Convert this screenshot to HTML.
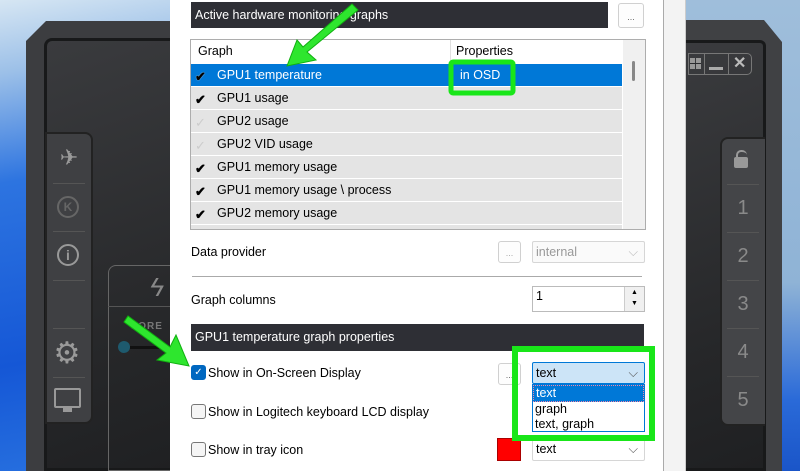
<!DOCTYPE html>
<html><head><meta charset="utf-8"><style>
*{box-sizing:border-box;margin:0;padding:0}
body{width:800px;height:471px;overflow:hidden;position:relative;font-family:"Liberation Sans",sans-serif;font-size:12.5px;color:#000;background:#4f8ad8}
.abs{position:absolute}
.hdr{background:#2e2f35;color:#fff;padding-left:4px;line-height:26px;font-size:12.5px}
.btn{border:1px solid #d0d0d0;border-radius:3px;background:#fdfdfd;color:#666;font-size:9px;text-align:center}
.row{position:absolute;left:0;width:431px;height:22px;background:#e4e4e4;line-height:22px}
.row span{position:absolute;left:26px}
.chk{position:absolute;left:4px;top:2px;font-size:13px;font-weight:bold}
.combo{border:1px solid #d6d6d6;border-radius:2px;background:#fff;padding-left:3px;line-height:20px}
.cb{width:15px;height:15px;border:1px solid #777;border-radius:3px;background:#f5f5f5}
.skin{background:linear-gradient(160deg,#3a3b3e,#262729 70%,#1f2022)}
.tab{color:#8a8a8a;text-align:center;font-size:20px}
</style></head><body>
<div class="abs" style="left:0;top:0;width:800px;height:471px;background:linear-gradient(170deg,#d6e6f3 0%,#9cc0e8 12%,#2d74e0 30%,#1557d6 60%,#3a8ae8 100%)"></div>
<div class="abs" style="left:660px;top:0;width:140px;height:471px;background:linear-gradient(180deg,#9fbedb 0%,#8fb3d6 60%,#2a6ad8 85%,#1a55c8 100%)"></div>
<!-- left skin -->
<div class="abs" style="left:26px;top:21px;width:160px;height:450px;background:#3c3d40;clip-path:polygon(20px 0,100% 0,100% 100%,0 100%,0 20px)"></div>
<div class="abs skin" style="left:44px;top:38px;width:140px;height:433px;border-radius:8px 0 0 0;border:3px solid #18191a;border-right:none"></div>
<div class="abs" style="left:45px;top:132px;width:48px;height:292px;background:#3f4043;border-radius:0 8px 8px 0;border:2px solid #222"></div>
<div class="abs tab" style="left:50px;top:145px;width:38px;font-size:22px;color:#9a9a9a">✈</div>
<div class="abs" style="left:53px;top:183px;width:32px;border-top:1px solid #555"></div>
<div class="abs" style="left:57px;top:196px;width:22px;height:22px;border:2px solid #666;border-radius:50%;color:#666;font-size:12px;text-align:center;line-height:18px;font-weight:bold">K</div>
<div class="abs" style="left:53px;top:231px;width:32px;border-top:1px solid #555"></div>
<div class="abs" style="left:57px;top:244px;width:22px;height:22px;border:2px solid #999;border-radius:50%;color:#999;font-size:14px;text-align:center;line-height:18px;font-weight:bold">i</div>
<div class="abs" style="left:53px;top:280px;width:32px;border-top:1px solid #555"></div>
<div class="abs" style="left:53px;top:328px;width:32px;border-top:1px solid #555"></div>
<div class="abs tab" style="left:50px;top:336px;width:34px;font-size:30px;color:#9a9a9a;line-height:36px">⚙</div>
<div class="abs" style="left:53px;top:377px;width:32px;border-top:1px solid #555"></div>
<div class="abs" style="left:54px;top:388px;width:27px;height:20px;border:2px solid #999;border-radius:2px"></div>
<div class="abs" style="left:63px;top:408px;width:9px;height:4px;background:#999"></div>
<div class="abs" style="left:108px;top:265px;width:70px;height:206px;border:1px solid #666;border-right:none;border-radius:8px 0 0 0"></div>
<div class="abs" style="left:108px;top:306px;width:70px;border-top:1px solid #555"></div>
<div class="abs" style="left:150px;top:272px;color:#888;font-size:26px;font-style:italic">ϟ</div>
<div class="abs" style="left:130px;top:321px;color:#777;font-size:10px;font-weight:bold;letter-spacing:1px">CORE</div>
<div class="abs" style="left:118px;top:341px;width:12px;height:12px;border-radius:50%;background:#1e5a6e"></div>
<div class="abs" style="left:130px;top:346px;width:45px;height:3px;background:#111"></div>
<!-- right skin -->
<div class="abs" style="left:686px;top:20px;width:96px;height:451px;background:#404144;clip-path:polygon(0 0,78px 0,100% 22px,100% 100%,0 100%)"></div>
<div class="abs skin" style="left:686px;top:40px;width:80px;height:431px;border:3px solid #18191a;border-left:none;border-radius:0 6px 0 0"></div>
<div class="abs" style="left:688px;top:53px;width:64px;height:22px;border:1px solid #777;border-radius:0 5px 5px 0"></div>
<div class="abs" style="left:704px;top:53px;height:22px;border-left:1px solid #777"></div>
<div class="abs" style="left:728px;top:53px;height:22px;border-left:1px solid #777"></div>
<div class="abs" style="left:690px;top:58px;width:11px;height:11px;background:linear-gradient(90deg,#999 45%,transparent 45%,transparent 55%,#999 55%)"></div>
<div class="abs" style="left:690px;top:63px;width:11px;height:1px;background:#2a2b2e"></div>
<div class="abs" style="left:709px;top:67px;width:14px;height:3px;background:#aaa"></div>
<div class="abs" style="left:733px;top:53px;color:#bbb;font-size:16px;font-weight:bold;line-height:22px">✕</div>
<div class="abs" style="left:720px;top:137px;width:45px;height:289px;background:#444548;border:2px solid #222;border-right:none;border-radius:8px 0 0 8px"></div>
<div class="abs" style="left:736px;top:150px;width:11px;height:9px;border:2px solid #999;border-bottom:none;border-right:none;border-radius:5px 5px 0 0"></div>
<div class="abs" style="left:734px;top:157px;width:14px;height:11px;background:#999;border-radius:2px"></div>
<div class="abs tab" style="left:726px;top:197px;width:34px">1</div>
<div class="abs tab" style="left:726px;top:245px;width:34px">2</div>
<div class="abs tab" style="left:726px;top:293px;width:34px">3</div>
<div class="abs tab" style="left:726px;top:341px;width:34px">4</div>
<div class="abs tab" style="left:726px;top:389px;width:34px">5</div>
<div class="abs" style="left:727px;top:184px;width:32px;border-top:1px solid #555"></div>
<div class="abs" style="left:727px;top:232px;width:32px;border-top:1px solid #555"></div>
<div class="abs" style="left:727px;top:280px;width:32px;border-top:1px solid #555"></div>
<div class="abs" style="left:727px;top:328px;width:32px;border-top:1px solid #555"></div>
<div class="abs" style="left:727px;top:376px;width:32px;border-top:1px solid #555"></div>
<!-- dialog -->
<div class="abs" style="left:170px;top:0;width:494px;height:471px;background:#fff"></div>
<div class="abs" style="left:663px;top:0;width:23px;height:471px;background:#f3f3f3;border-left:1px solid #aaa;border-right:1px solid #ccc"></div>
<div class="abs hdr" style="left:191px;top:2px;width:417px;height:26px">Active hardware monitoring graphs</div>
<div class="abs btn" style="left:618px;top:3px;width:26px;height:25px;line-height:26px">...</div>
<div class="abs" style="left:190px;top:39px;width:456px;height:191px;border:1px solid #adadad;background:#fff;overflow:hidden">
 <div class="abs" style="left:7px;top:4px">Graph</div>
 <div class="abs" style="left:265px;top:4px">Properties</div>
 <div class="abs" style="left:259px;top:0;height:23px;border-left:1px solid #e0e0e0"></div>
 <div class="row" style="top:24px;background:#0078d7;color:#fff"><b class="chk" style="color:#000;text-shadow:0 0 1px #fff">✔</b><span>GPU1 temperature</span><span style="left:269px">in OSD</span></div>
 <div class="row" style="top:47px"><b class="chk">✔</b><span>GPU1 usage</span></div>
 <div class="row" style="top:70px"><b class="chk" style="color:#ccc;font-weight:normal">✓</b><span>GPU2 usage</span></div>
 <div class="row" style="top:93px"><b class="chk" style="color:#ccc;font-weight:normal">✓</b><span>GPU2 VID usage</span></div>
 <div class="row" style="top:116px"><b class="chk">✔</b><span>GPU1 memory usage</span></div>
 <div class="row" style="top:139px"><b class="chk">✔</b><span>GPU1 memory usage \ process</span></div>
 <div class="row" style="top:162px"><b class="chk">✔</b><span>GPU2 memory usage</span></div>
 <div class="row" style="top:185px"></div>
 <div class="abs" style="left:432px;top:0;width:22px;height:191px;background:#f0f0f0"></div>
 <div class="abs" style="left:441px;top:21px;width:3px;height:20px;background:#888;border-radius:2px"></div>
</div>
<div class="abs" style="left:191px;top:245px">Data provider</div>
<div class="abs btn" style="left:498px;top:241px;width:23px;height:22px;line-height:22px;color:#aaa">...</div>
<div class="abs combo" style="left:532px;top:241px;width:113px;height:22px;color:#999;background:#fafafa">internal<span style="position:absolute;right:6px;color:#bbb">⌵</span></div>
<div class="abs" style="left:192px;top:276px;width:450px;border-top:1px solid #aaa"></div>
<div class="abs" style="left:191px;top:293px">Graph columns</div>
<div class="abs" style="left:532px;top:286px;width:113px;height:26px;border:1px solid #bbb;background:#fff;padding:2px 3px">1</div>
<div class="abs" style="left:624px;top:287px;width:20px;height:24px;background:#f0f0f0;border-left:1px solid #ccc;font-size:7px;text-align:center;line-height:11px">▲<br>▼</div>
<div class="abs hdr" style="left:191px;top:324px;width:453px;height:27px">GPU1 temperature graph properties</div>
<div class="abs cb" style="left:191px;top:365px;background:#0067c0;border-color:#0067c0;color:#fff;font-size:10px;text-align:center;line-height:13px">✓</div>
<div class="abs" style="left:208px;top:366px">Show in On-Screen Display</div>
<div class="abs btn" style="left:498px;top:363px;width:23px;height:22px;line-height:22px">...</div>
<div class="abs combo" style="left:532px;top:362px;width:113px;height:22px;background:#cce4f7;border-color:#0078d7">text<span style="position:absolute;right:6px;color:#555">⌵</span></div>
<div class="abs" style="left:532px;top:384px;width:113px;height:48px;border:1px solid #0078d7;background:#fff;line-height:15px;padding-left:2px">
 <div style="background:#0078d7;color:#fff;margin-left:-2px;padding-left:2px;border:1px dotted #e8a">text</div><div>graph</div><div>text, graph</div></div>
<div class="abs cb" style="left:191px;top:404px"></div>
<div class="abs" style="left:208px;top:405px">Show in Logitech keyboard LCD display</div>
<div class="abs cb" style="left:191px;top:442px"></div>
<div class="abs" style="left:208px;top:443px">Show in tray icon</div>
<div class="abs" style="left:497px;top:438px;width:24px;height:23px;background:#f00;border:1px solid #a00"></div>
<div class="abs combo" style="left:532px;top:438px;width:113px;height:23px">text<span style="position:absolute;right:6px;color:#555">⌵</span></div>
<svg class="abs" style="left:0;top:0" width="800" height="471">
 <rect x="451" y="62" width="62" height="31" fill="none" stroke="#19e619" stroke-width="5" rx="2"/>
 <rect x="515" y="349" width="137" height="89" fill="none" stroke="#19e619" stroke-width="6"/>
 <polygon points="352,4 358,10 307,52 316,60 287,66 297,40 303,47" fill="#2ee62e" stroke="#10b010" stroke-width="1"/>
 <polygon points="124,322 128,316 170,347 176,335 189,366 157,360 166,353" fill="#2ee62e" stroke="#10b010" stroke-width="1"/>
</svg>
</body></html>
